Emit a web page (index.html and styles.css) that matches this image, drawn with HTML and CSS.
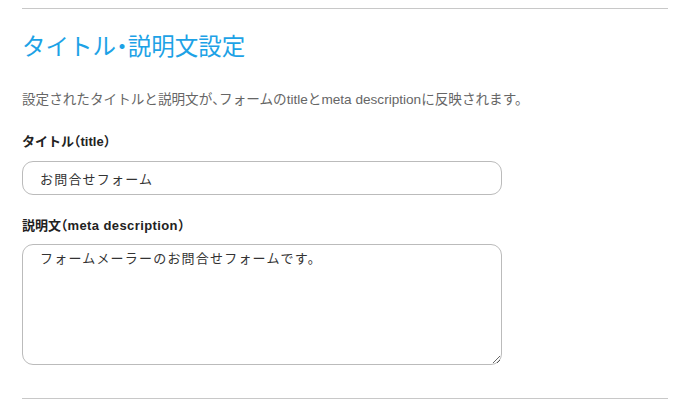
FILE: index.html
```html
<!DOCTYPE html>
<html lang="ja">
<head>
<meta charset="utf-8">
<link rel="stylesheet" href="styles.css">
</head>
<body>
<section class="settings">
  <h2 class="title">タイトル<span class="half">・</span>説明文設定</h2>
  <p class="desc">設定されたタイトルと説明文が<span class="half">、</span>フォームのtitleとmeta descriptionに反映されます。</p>
  <label class="label" for="t">タイトル<span class="half">（</span>title<span class="half">）</span></label>
  <input class="field" id="t" type="text" value="お問合せフォーム">
  <label class="label label2" for="d">説明文<span class="half">（</span><span class="latin">meta description</span><span class="half">）</span></label>
  <textarea class="area" id="d">フォームメーラーのお問合せフォームです。</textarea>
</section>
<div class="rule"></div>
</body>
</html>
```
FILE: styles.css
```css
html, body {
  margin: 0;
  padding: 0;
  background: #fff;
}
body {
  padding: 8px 28px 0 22px;
  font-family: "Liberation Sans", "Noto Sans CJK JP", sans-serif;
  color: #333;
}
.settings {
  border-top: 1px solid #c8c8c8;
  display: flex;
  flex-direction: column;
  align-items: flex-start;
}
.half {
  font-feature-settings: "halt";
}
.title {
  margin: 23px 0 0;
  font-size: 23.5px;
  line-height: 30px;
  font-weight: normal;
  color: #1da2e6;
}
.desc {
  margin: 28px 0 0;
  font-size: 13.6px;
  line-height: 20px;
  color: #666;
}
.label {
  margin-top: 22px;
  font-size: 13px;
  line-height: 20px;
  font-weight: bold;
  color: #222;
}
.latin {
  letter-spacing: 0.4px;
}
.label2 {
  margin-top: 21px;
}
.field, .area {
  box-sizing: border-box;
  width: 480px;
  border: 1px solid #bbb;
  border-radius: 11px;
  font-family: "Liberation Sans", "Noto Sans CJK JP", sans-serif;
  font-size: 13px;
  letter-spacing: 1.2px;
  color: #333;
  background: #fff;
  outline: none;
}
.field {
  margin-top: 9px;
  height: 34px;
  padding: 0 17px;
}
.area {
  margin-top: 8px;
  height: 121px;
  padding: 5px 17px;
  line-height: 18px;
  resize: vertical;
}
.rule {
  margin-top: 33px;
  border-top: 1px solid #c8c8c8;
}
```
